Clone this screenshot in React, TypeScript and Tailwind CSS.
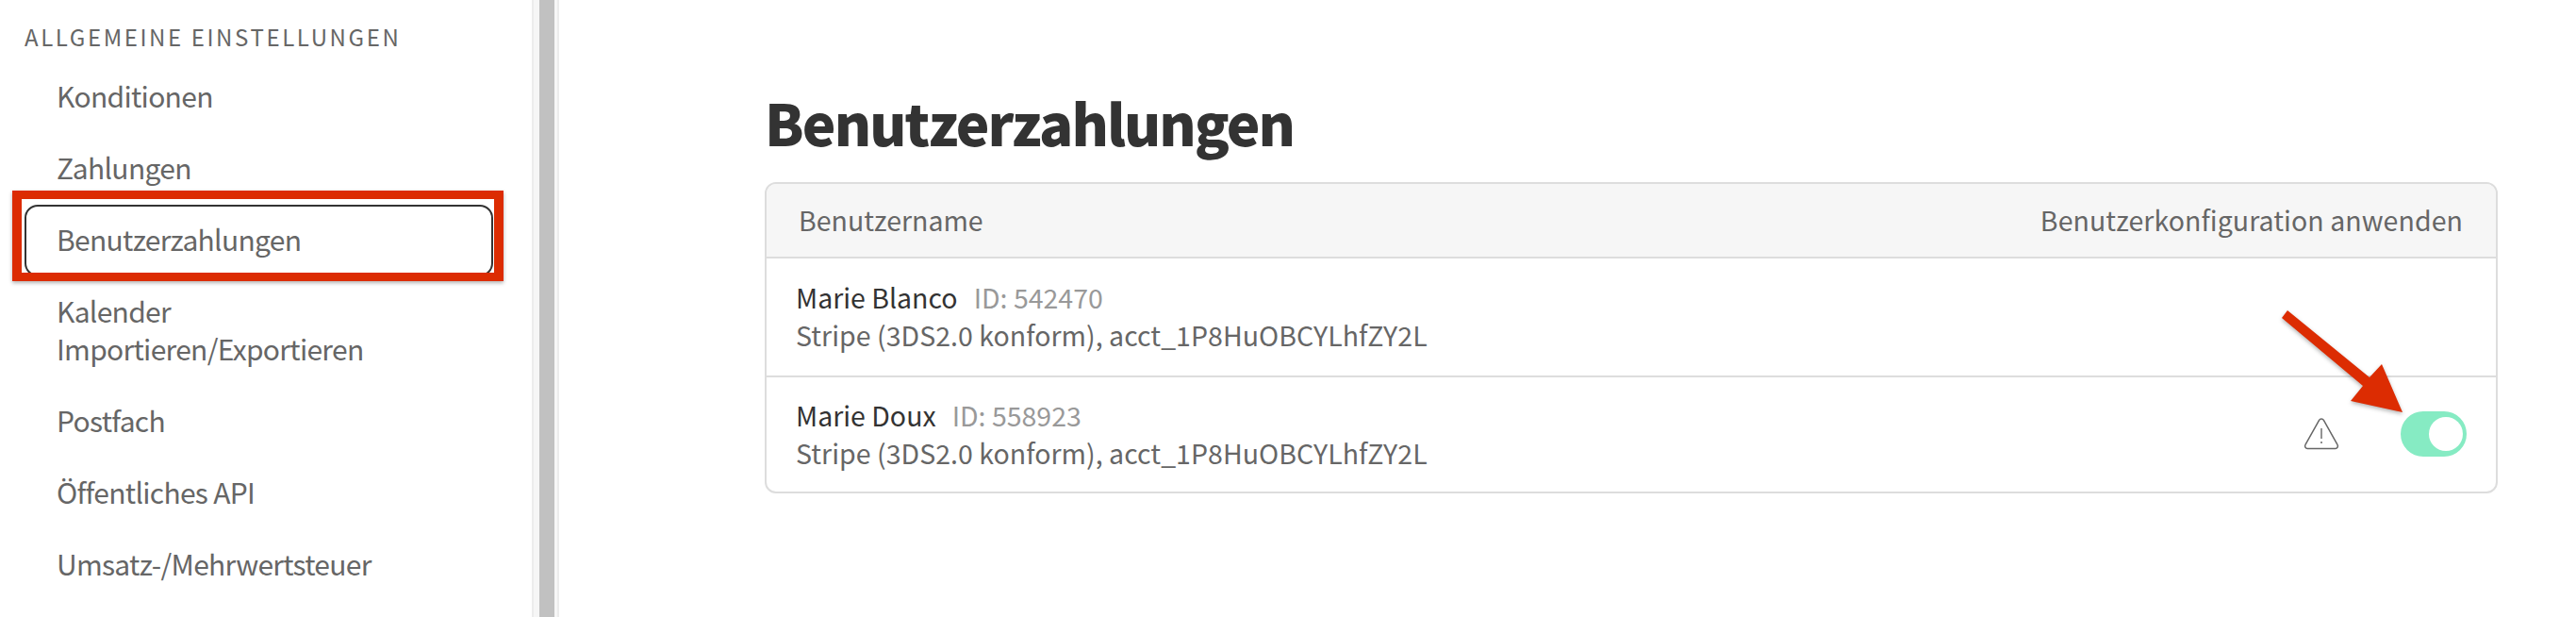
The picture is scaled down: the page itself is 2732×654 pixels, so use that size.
const navItems = [
	["Konditionen"],
	["Zahlungen"],
	["Benutzerzahlungen"],
	["Kalender", "Importieren/Exportieren"],
	["Postfach"],
	["Öffentliches API"],
	["Umsatz-/Mehrwertsteuer"],
];

const users = [
	{ name: "Marie Blanco", id: "542470", warn: false },
	{ name: "Marie Doux", id: "558923", warn: true },
];

function WarningIcon() {
	return (
		<svg width="38" height="34" viewBox="0 0 38 34" fill="none" className="block">
			<path
				d="M16.6 2.4a2.8 2.8 0 0 1 4.8 0l14.6 26a2.6 2.6 0 0 1-2.3 4H4.3a2.6 2.6 0 0 1-2.3-4z"
				stroke="#666"
				strokeWidth="1.5"
			/>
			<path d="M19 11v11" stroke="#666" strokeWidth="1.4" />
			<circle cx="19" cy="26" r="1" fill="#666" />
		</svg>
	);
}

function Toggle() {
	return (
		<div className="flex h-12 w-[70px] items-center justify-end rounded-full bg-[#86ebc3] pr-1">
			<div className="size-9 rounded-full bg-white" />
		</div>
	);
}

function Sidebar() {
	return (
		<aside className="w-[564px] shrink-0">
			<h2 className="pt-[24px] pl-[26px] text-[24px]/[30px] tracking-[2.6px] text-[#666]">
				ALLGEMEINE EINSTELLUNGEN
			</h2>

			<nav className="mt-[9px] flex flex-col tracking-[-0.7px]">
				{navItems.map((lines) => (
					<a
						key={lines[0]}
						className={
							lines[0] === "Benutzerzahlungen"
								? "mt-[2px] mb-[-2px] ml-[26px] w-[497px] rounded-[14px] border-2 border-[#333] pt-[14px] pb-[18px] pl-[32px] text-[30px]/[40px] text-[#666]"
								: "py-[18px] pl-[60px] text-[30px]/[40px] text-[#666]"
						}
					>
						{lines.map((line) => (
							<div key={line}>{line}</div>
						))}
					</a>
				))}
			</nav>
		</aside>
	);
}

function Scrollbar() {
	return (
		<div className="h-full w-[29px] shrink-0 border-x-2 border-[#ececec] bg-[#f6f6f6] pl-[6px]">
			<div className="h-full w-4 bg-[#c1c1c1]" />
		</div>
	);
}

function UserTable() {
	return (
		<div className="overflow-hidden rounded-[12px] border-2 border-[#ddd]">
			<div className="flex h-[77px] items-center justify-between bg-[#f6f6f6] pr-[35px] pl-[34px] text-[28.5px] text-[#666]">
				<span>Benutzername</span>
				<span className="tracking-[0.07px]">Benutzerkonfiguration anwenden</span>
			</div>

			{users.map((user) => (
				<div
					key={user.id}
					className="flex h-[126px] items-center justify-between border-t-2 border-[#ddd] pr-[31px] pb-[2px] pl-[31px] last:h-[123px]"
				>
					<div className="text-[28.5px]/[40px] text-[#666]">
						<div>
							<span className="text-[#333]">{user.name}</span>
							<span className="ml-[17px] text-[#999]">ID: {user.id}</span>
						</div>
						<div className="tracking-[0.04px]">Stripe (3DS2.0 konform), acct_1P8HuOBCYLhfZY2L</div>
					</div>

					{user.warn && (
						<div className="flex items-center gap-[65px]">
							<WarningIcon />
							<Toggle />
						</div>
					)}
				</div>
			))}
		</div>
	);
}

export default function App() {
	return (
		<div className="relative flex h-[654px] w-[2732px] overflow-hidden bg-white font-['Noto_Sans_CJK_SC','Noto_Sans',sans-serif]">
			<Sidebar />
			<Scrollbar />

			<main className="flex-1 pt-[94px] pr-[83px] pl-[218px]">
				<h1 className="text-[60px]/[70px] font-black tracking-[-1.9px] text-[#333]">Benutzerzahlungen</h1>
				<div className="mt-[29px]">
					<UserTable />
				</div>
			</main>

			{/* red annotations over the screenshot */}
			<div className="absolute top-[202px] left-[13px] h-[96px] w-[521px] border-y-[9px] border-x-[10px] border-[#dc2c02] shadow-[0_2px_4px_rgba(0,0,0,0.3)]" />
			<svg
				className="absolute top-[320px] left-[2410px] drop-shadow-[0_2px_2px_rgba(0,0,0,0.3)]"
				width="150"
				height="130"
				viewBox="2410 320 150 130"
			>
				<path
					d="M2426 329 L2513 400 L2526 386 L2548 437 L2493 425 L2506 409 L2420 337 Z"
					fill="#dc2c02"
				/>
			</svg>
		</div>
	);
}
